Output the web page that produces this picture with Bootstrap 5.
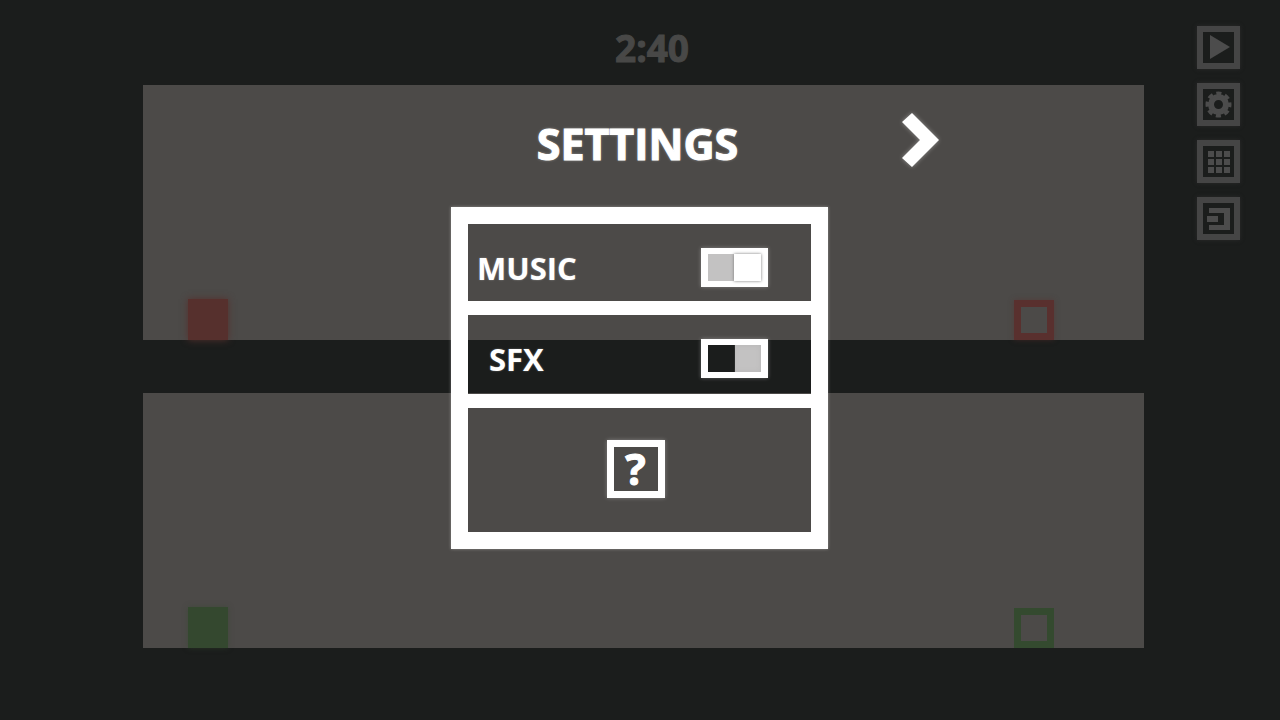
<!DOCTYPE html>
<html lang="en">
<head>
<meta charset="utf-8">
<meta name="viewport" content="width=device-width, initial-scale=1">
<title>Settings</title>
<link href="https://cdn.jsdelivr.net/npm/bootstrap@5.3.0/dist/css/bootstrap.min.css" rel="stylesheet">
<style>
  body { background: #1b1d1c; font-family: "Open Sans", "Noto Sans", sans-serif; font-weight: 700; }
  .game { display: grid; grid-template-columns: 143px 1fr 136px; min-height: 100vh; }
  .stage { grid-column: 2; }
  .clock { height: 85px; padding: 20px 0 0 17px; font-size: 37px; color: #484847; -webkit-text-stroke: 1px; }
  .arena { height: 255px; padding: 0 90px 0 45px; background: #4c4a48; }
  .arena + .arena { margin-top: 53px; }
  .block { width: 40px; height: 41px; }
  .goal { width: 40px; height: 40px; border: 7px solid; }
  .red .block { background: #56302d; box-shadow: 0 0 7px #56302d; }
  .red .goal { border-color: #59302e; box-shadow: 0 0 5px #59302e80; }
  .green .block { background: #34482f; box-shadow: 0 0 5px #34482f80; }
  .green .goal { border-color: #344a2f; }
  .tools { padding: 26px 0 0 53px; gap: 14px; }
  .tool { width: 43px; height: 43px; padding: 0; border: 6px solid #454545; background: #1b1d1c; color: #4c4c4c; position: relative; z-index: 2; box-shadow: 0 0 4px #2b2b2b; }
  .tool svg, .next svg { display: block; }
  .overlay { padding: 107px 1px 0 0; color: #fff; pointer-events: none; }
  .overlay button, .overlay input, .overlay label { pointer-events: auto; }
  .heading { display: grid; grid-template-columns: 1fr auto 1fr; width: 100%; height: 100px; padding-right: 4px; }
  .heading h1 { grid-column: 2; margin: 0; padding-top: 8px; font-size: 43px; line-height: 58px; font-weight: 700; text-shadow: 0 0 3px #ffffff80; -webkit-text-stroke: 1px; }
  .next { align-self: start; margin: 5px 0 0 163px; padding: 0; border: 0; background: none; color: #fff; filter: drop-shadow(0 0 2px #ffffff60); }
  .panel { width: 377px; border: 17px solid #fff; box-shadow: 0 0 3px #ffffff60; }
  .option { min-height: 91px; border-bottom: 14px solid #fff; padding: 10px 43px 0 9px; font-size: 31px; line-height: 40px; text-shadow: 0 0 2px #ffffff60; }
  .option + .option { min-height: 93px; padding-top: 8px; padding-left: 21px; }
  .switch { appearance: none; margin: 0; width: 67px; height: 39px; border: 6px solid #fff; border-width: 6px 7px; background: linear-gradient(90deg, #1b1d1c 27px, #c3c2c2 27px); box-shadow: 0 0 4px #ffffff50; }
  .switch::before { content: ""; display: block; width: 27px; height: 27px; margin-left: 26px; box-shadow: inset 0 0 5px #99999940; }
  .switch:checked { background: #c3c2c2; }
  .switch:checked::before { background: #fff; box-shadow: 0 0 3px #777; }
  .help-row { min-height: 124px; padding: 0 8px 2px 0; }
  .help { width: 58px; height: 58px; padding: 0; border: 7px solid #fff; background: transparent; color: #fff; font-size: 43px; line-height: 44px; font-weight: 700; box-shadow: 0 0 4px #ffffff50; -webkit-text-stroke: 1px; }
</style>
</head>
<body>
<main class="position-relative">
  <div class="game">
    <section class="stage">
      <div class="clock text-center"><time>2:40</time></div>
      <div class="arena red d-flex align-items-end justify-content-between"><div class="block"></div><div class="goal"></div></div>
      <div class="arena green d-flex align-items-end justify-content-between"><div class="block"></div><div class="goal"></div></div>
    </section>
    <nav class="tools d-flex flex-column" aria-label="Game">
      <button class="tool" type="button" aria-label="Play"><svg width="31" height="31" viewBox="0 0 31 31" fill="currentColor"><path d="M7 3v24l20-12z"/></svg></button>
      <button class="tool" type="button" aria-label="Settings"><svg width="31" height="31" viewBox="0 0 31 31" fill="none" stroke="currentColor"><circle cx="15.500" cy="15.500" r="7.500" stroke-width="6"/><circle cx="15.500" cy="15.500" r="11" stroke-width="4" stroke-dasharray="5 3.640" stroke-dashoffset="2.500"/></svg></button>
      <button class="tool" type="button" aria-label="Levels"><svg width="31" height="31" viewBox="0 0 31 31" fill="currentColor"><path d="M5 5h6v6H5zM13 5h6v6h-6zM21 5h6v6h-6zM5 13h6v6H5zM13 13h6v6h-6zM21 13h6v6h-6zM5 21h6v6H5zM13 21h6v6h-6zM21 21h6v6h-6z"/></svg></button>
      <button class="tool" type="button" aria-label="Exit"><svg width="31" height="31" viewBox="0 0 31 31" fill="currentColor"><path d="M6 5h21v22H6v-5h15V10H6zM4 13h11v6H4z"/></svg></button>
    </nav>
  </div>

  <div class="overlay position-absolute top-0 start-0 w-100 d-flex flex-column align-items-center" role="dialog" aria-labelledby="title">
    <header class="heading">
      <h1 id="title">SETTINGS</h1>
      <button class="next text-start" type="button" aria-label="Next"><svg width="39" height="56" viewBox="0 0 39 56" fill="currentColor"><path d="M1 10l10-9 27 27-27 27-10-9 18-18z"/></svg></button>
    </header>
    <div class="panel">
      <div class="option d-flex align-items-center justify-content-between"><label for="music">MUSIC</label><input class="switch" type="checkbox" role="switch" id="music" checked></div>
      <div class="option d-flex align-items-center justify-content-between"><label for="sfx">SFX</label><input class="switch" type="checkbox" role="switch" id="sfx"></div>
      <div class="help-row d-flex align-items-center justify-content-center"><button class="help" type="button">?</button></div>
    </div>
  </div>
</main>
<script src="https://cdn.jsdelivr.net/npm/bootstrap@5.3.0/dist/js/bootstrap.bundle.min.js"></script>
</body>
</html>
